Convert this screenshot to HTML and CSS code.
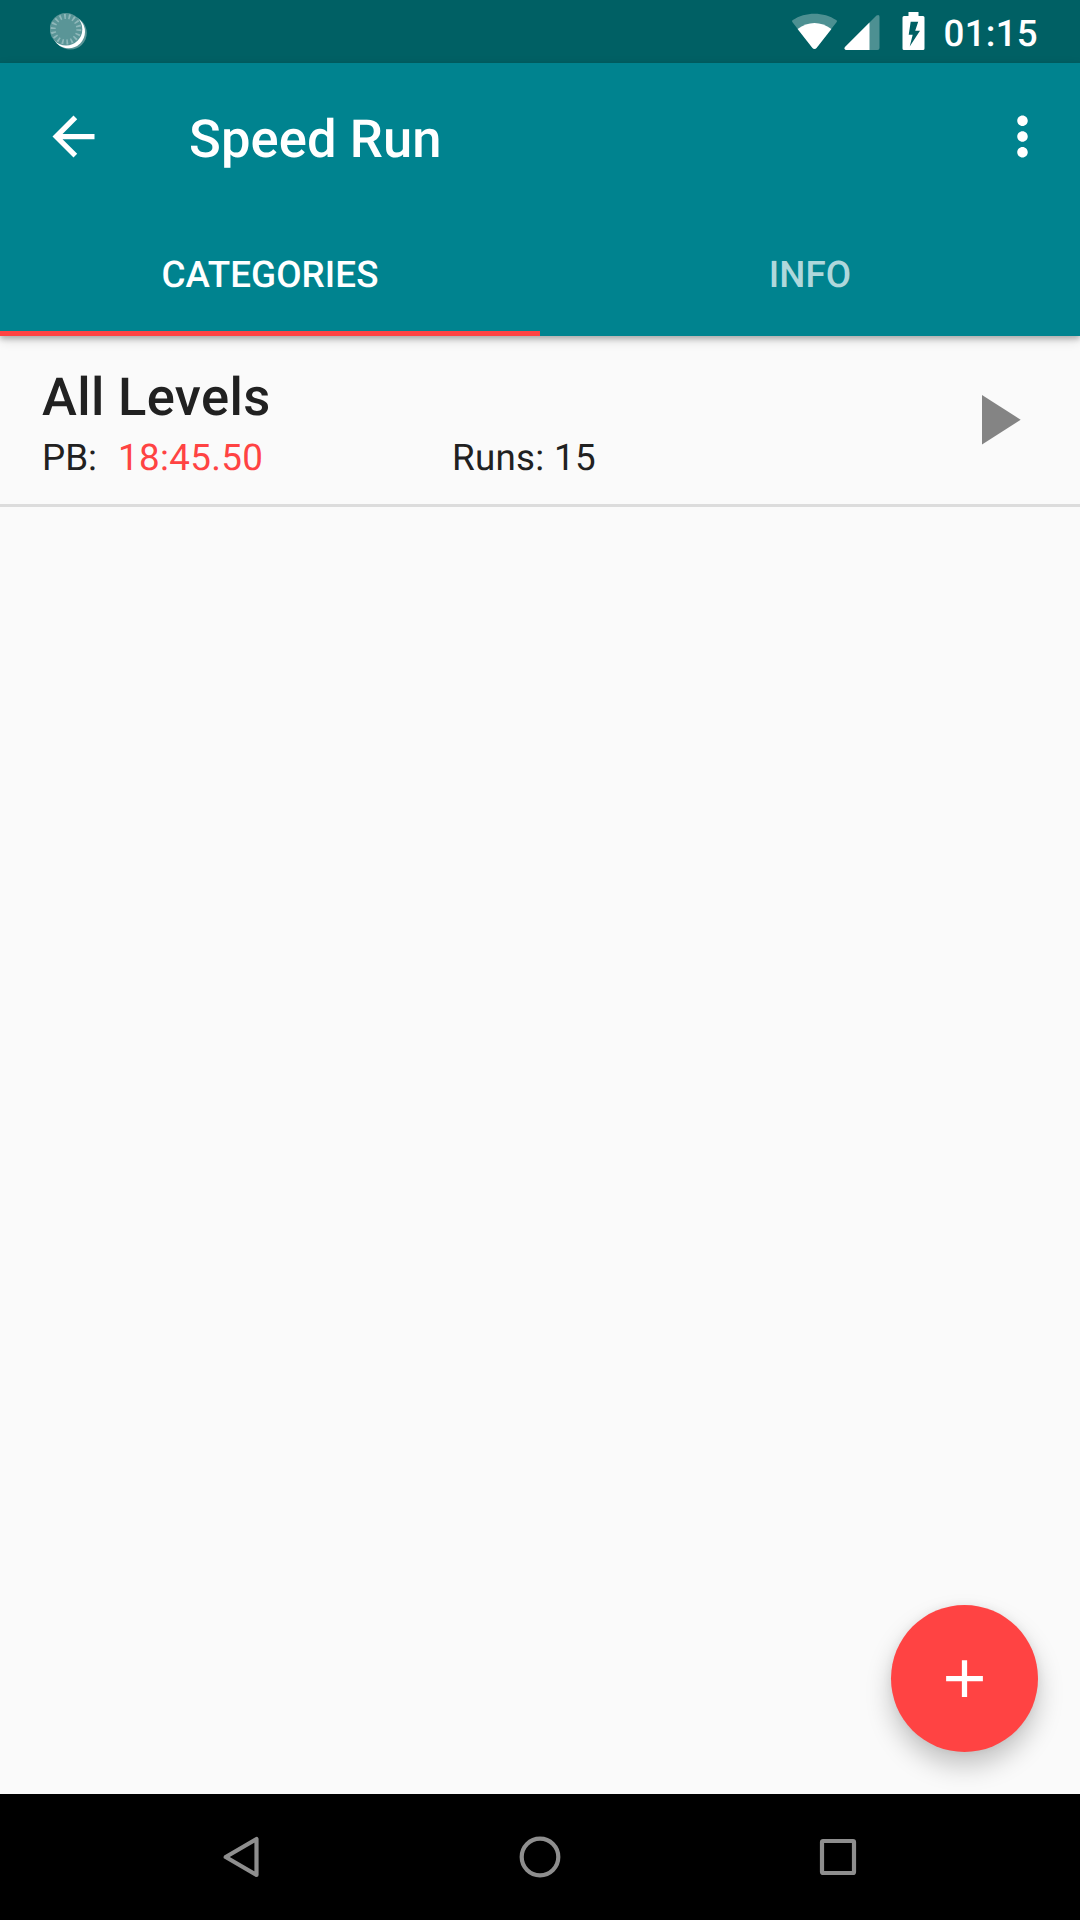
FILE: index.html
```html
<!DOCTYPE html>
<html lang="en">
<head>
<meta charset="utf-8">
<title>Speed Run</title>
<link rel="stylesheet" href="styles.css">
</head>
<body>
<div class="screen">
  <div class="status-bar">
    <svg class="sync-icon" width="40" height="40" viewBox="0 0 40 40">
      <circle cx="20.300" cy="21" r="16.500" fill="#5a9597"/>
      <circle cx="18.500" cy="19.800" r="16.500" fill="#fff"/>
      <circle cx="16" cy="17.200" r="16.300" fill="#5a9597"/>
      <circle cx="16" cy="17.200" r="12.800" fill="none" stroke="#8fb8ba" stroke-width="5" stroke-dasharray="1.700 2.768"/>
    </svg>
    <div class="status-right">
      <svg class="status-icons" width="134" height="40" viewBox="0 0 134 40">
        <path d="M22.500 37Q21.500 37 20.500 36L.5 10.200Q-.5 9 .8 8C13 -.5 32 -.5 44.200 8Q45.500 9 44.500 10.200L24.500 36Q23.500 37 22.500 37Z" fill="#4d9092"/>
        <path d="M22.500 37Q21.500 37 20.500 36L5.600 17C16 9 29 9 39.400 17L24.500 36Q23.500 37 22.500 37Z" fill="#fff"/>
        <path d="M54 38Q51.500 37 53 35L84.500 3.600Q87.500 2 87.500 5V36Q87.500 38 85.500 38Z" fill="#4d9092"/>
        <path d="M54 38Q51.500 37 53 35L77.500 10.600V38Z" fill="#fff"/>
        <path fill-rule="evenodd" d="M116.500 0H126.500V4H131Q132.500 4 132.500 5.500V36.500Q132.500 38 131 38H112Q110.500 38 110.500 36.500V5.500Q110.500 4 112 4H116.500ZM118.700 9.700 116.700 22.700H120.700L117.700 34.500 128 18.700H123.200L126.200 9.700Z" fill="#fff"/>
      </svg>
      <span class="clock">01:15</span>
    </div>
  </div>
  <header class="app-bar">
    <div class="toolbar">
      <svg class="back" width="63" height="63" viewBox="0 0 24 24"><path fill="#fff" d="M20 11H7.830l5.590-5.590L12 4l-8 8 8 8 1.410-1.410L7.830 13H20z"/></svg>
      <h1 class="title">Speed Run</h1>
      <svg class="more" width="63" height="63" viewBox="0 0 24 24"><path fill="#fff" d="M12 8c1.100 0 2-.9 2-2s-.9-2-2-2-2 .9-2 2 .9 2 2 2zm0 2c-1.100 0-2 .9-2 2s.9 2 2 2 2-.9 2-2-.9-2-2-2zm0 6c-1.100 0-2 .9-2 2s.9 2 2 2 2-.9 2-2-.9-2-2-2z"/></svg>
    </div>
    <nav class="tabs">
      <div class="tab active">CATEGORIES</div>
      <div class="tab">INFO</div>
    </nav>
  </header>
  <main class="content">
    <div class="row">
      <div class="details">
        <h2 class="name">All Levels</h2>
        <div class="stats">
          <span class="best">PB:<span class="time">18:45.50</span></span>
          <span class="runs">Runs: 15</span>
        </div>
      </div>
      <svg class="play" width="39" height="50" viewBox="0 0 39 50"><path d="M0 0 38.700 24.700 0 49.400Z" fill="#848484"/></svg>
    </div>
    <div class="fab">
      <svg width="63" height="63" viewBox="0 0 24 24"><path fill="#fff" d="M19 13h-6v6h-2v-6H5v-2h6V5h2v6h6v2z"/></svg>
    </div>
  </main>
  <footer class="nav-bar">
    <svg width="42" height="42" viewBox="0 0 42 42"><path d="M35.500 3V39L4.700 21Z"/></svg>
    <svg width="42" height="42" viewBox="0 0 42 42"><circle cx="21" cy="21" r="18.300"/></svg>
    <svg width="42" height="42" viewBox="0 0 42 42"><rect x="5" y="5" width="32" height="32" rx="1"/></svg>
  </footer>
</div>
</body>
</html>
```
FILE: styles.css
```css
* {
  box-sizing: border-box;
}

body {
  margin: 0;
  font-family: Roboto, "Noto Sans", sans-serif;
  text-rendering: geometricPrecision;
}

svg {
  display: block;
  flex: none;
}

.screen {
  display: flex;
  flex-direction: column;
  width: 1080px;
  height: 1920px;
  overflow: hidden;
  background: #fafafa;
}

.status-bar {
  display: flex;
  justify-content: space-between;
  height: 63px;
  padding: 12px 42px 0 50px;
  background: #006064;
}

.status-right {
  display: flex;
  gap: 18px;
}

.clock {
  font-size: 36.75px;
  font-weight: 500;
  letter-spacing: 0.25px;
  line-height: 43px;
  color: #fff;
}

.app-bar {
  position: relative;
  z-index: 1;
  height: 273px;
  background: #00838f;
  box-shadow: 0 3px 5px rgba(0, 0, 0, 0.22), 0 4px 11px rgba(0, 0, 0, 0.14);
}

.toolbar {
  display: flex;
  align-items: center;
  height: 147px;
  padding: 0 26px 0 42px;
}

.title {
  flex: 1;
  margin: 0;
  padding: 4px 0 0 84px;
  font-size: 52.5px;
  font-weight: 500;
  letter-spacing: 0.1px;
  color: #fff;
}

.tabs {
  display: grid;
  grid-template-columns: 1fr 1fr;
  height: 126px;
}

.tab {
  padding-top: 8px;
  border-bottom: 5px solid transparent;
  font-size: 36.75px;
  font-weight: 500;
  letter-spacing: 0.1px;
  line-height: 113px;
  text-align: center;
  color: rgba(255, 255, 255, 0.7);
}

.tab.active {
  border-color: #ff4343;
  color: #fff;
}

.content {
  position: relative;
  flex: 1;
}

.row {
  display: flex;
  justify-content: space-between;
  padding: 30px 59px 24px 42px;
  border-bottom: 3px solid #dcdcdc;
  color: #212121;
}

.name {
  margin: 0 0 8px;
  font-size: 52.5px;
  font-weight: 500;
  letter-spacing: 0.35px;
  line-height: 62px;
}

.stats {
  display: grid;
  grid-template-columns: 410px auto;
  font-size: 36.75px;
  line-height: 44px;
}

.time {
  margin-left: 21px;
  letter-spacing: 0.35px;
  color: #ff4343;
}

.runs {
  letter-spacing: 0.3px;
}

.play {
  margin-top: 29px;
}

.fab {
  position: absolute;
  right: 42px;
  bottom: 42px;
  display: grid;
  place-items: center;
  width: 147px;
  height: 147px;
  border-radius: 50%;
  background: #ff4343;
  box-shadow: 0 14px 26px rgba(0, 0, 0, 0.22), 0 0 10px rgba(0, 0, 0, 0.06);
}

.nav-bar {
  position: relative;
  z-index: 1;
  display: flex;
  justify-content: center;
  align-items: center;
  gap: 256px;
  height: 126px;
  background: #000;
}

.nav-bar svg {
  fill: none;
  stroke: #8e8e8e;
  stroke-width: 4.2;
  stroke-linejoin: round;
}
```
